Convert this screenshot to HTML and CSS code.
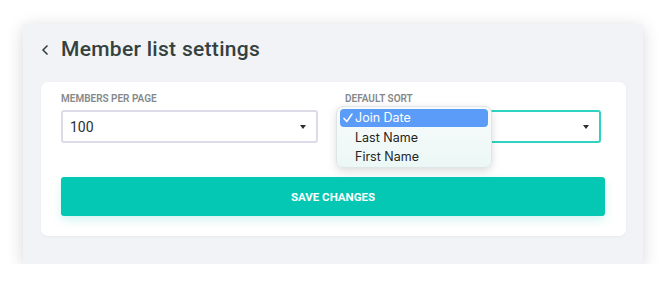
FILE: index.html
```html
<!DOCTYPE html>
<html>
<head>
<meta charset="utf-8">
<link rel="stylesheet" href="styles.css">
</head>
<body>
<div class="panel">
  <div class="header">
    <svg class="back" width="8" height="12" viewBox="0 0 8 12"><path d="M6.5 1.5 L2 6 L6.5 10.5" fill="none" stroke="#2f3b3b" stroke-width="1.5"/></svg>
    <h1 class="title">Member list settings</h1>
  </div>
  <div class="card">
    <div class="fields">
      <div class="field">
        <div class="label">MEMBERS PER PAGE</div>
        <div class="select">
          <span class="value">100</span>
          <span class="caret"></span>
        </div>
      </div>
      <div class="field field-sort">
        <div class="label">DEFAULT SORT</div>
        <div class="select select-active">
          <span class="value"></span>
          <span class="caret"></span>
        </div>
        <div class="menu">
          <div class="option option-selected"><svg class="check" width="10" height="10" viewBox="0 0 10 10"><path d="M1 5.4 L3.8 8.6 L9 1" fill="none" stroke="#ffffff" stroke-width="1.5" stroke-linecap="round" stroke-linejoin="round"/></svg>Join Date</div>
          <div class="option">Last Name</div>
          <div class="option">First Name</div>
        </div>
      </div>
    </div>
    <button class="save">SAVE CHANGES</button>
  </div>
</div>
</body>
</html>
```

FILE: styles.css
```css
* { box-sizing: border-box; }
html, body { margin: 0; padding: 0; background: #ffffff; }
body {
  font-family: Roboto, "Liberation Sans", sans-serif;
  padding: 24px 0 0 23px;
}
.panel {
  width: 620px;
  height: 240px;
  background: #f2f3f6;
  box-shadow: 0 3px 16px rgba(0, 0, 0, 0.16);
  padding: 0 17px 0 18px;
}
.header {
  display: flex;
  align-items: center;
  height: 58px;
  padding: 0 0 9px 0;
  gap: 12px;
}
.back { display: block; margin-top: 3px; }
.title {
  margin: 0;
  font-size: 21px;
  font-weight: 500;
  color: #34413f;
  letter-spacing: 0.3px;
}
.card {
  background: #ffffff;
  border-radius: 7px;
  padding: 11px 20px 20px 20px;
  box-shadow: 0 1px 3px rgba(0, 0, 0, 0.04);
}
.fields {
  display: grid;
  grid-template-columns: 257px 256px;
  column-gap: 27px;
}
.field { position: relative; }
.label {
  font-size: 10px;
  font-weight: 600;
  color: #85898b;
  line-height: 12px;
  margin-bottom: 5px;
}
.select {
  height: 33px;
  border: 2px solid #dcdbe9;
  border-radius: 3px;
  display: flex;
  align-items: center;
  justify-content: space-between;
  padding: 0 10px 0 7px;
  font-size: 14px;
  color: #2b2f31;
}
.select-active { border-color: #2fd3c1; }
.caret {
  width: 0;
  height: 0;
  border-left: 3.5px solid transparent;
  border-right: 3.5px solid transparent;
  border-top: 4px solid #2b2f31;
  margin-top: 1px;
}
.menu {
  position: absolute;
  left: -9px;
  top: 13px;
  width: 156px;
  height: 62px;
  background: linear-gradient(#f8fbfb, #ecf8f6);
  border: 1px solid #dfe5e5;
  border-radius: 7px;
  box-shadow: 0 3px 8px rgba(0, 0, 0, 0.14);
  padding: 2px 3px;
  font-family: Inter, "Noto Sans", sans-serif;
  font-size: 12.5px;
  color: #232323;
}
.option {
  height: 19px;
  line-height: 19px;
  padding-left: 15px;
  position: relative;
}
.option-selected {
  background: #5b9cf8;
  color: #fff;
  border-radius: 4px;
  height: 18px;
  line-height: 18px;
  margin-bottom: 1px;
}
.check {
  position: absolute;
  left: 3px;
  top: 4px;
}
.save {
  display: block;
  width: 544px;
  height: 39px;
  margin-top: 34px;
  border: none;
  border-radius: 3px;
  background: #04c7b4;
  color: #fff;
  font-family: Roboto, "Liberation Sans", sans-serif;
  font-size: 11.5px;
  font-weight: 700;
  box-shadow: 0 4px 10px rgba(4, 199, 180, 0.18);
}
```
